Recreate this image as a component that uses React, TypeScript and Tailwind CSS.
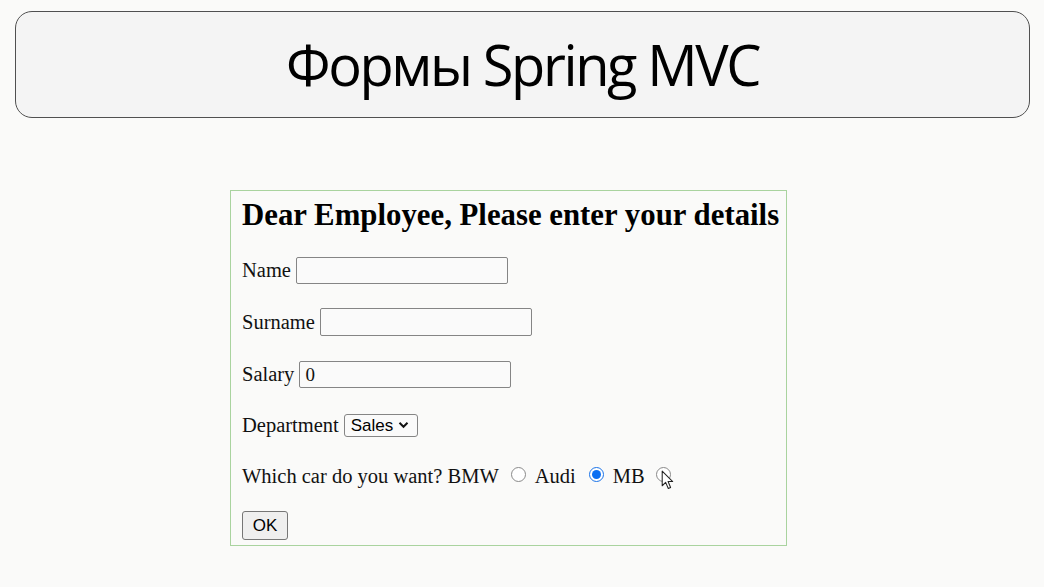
import React from "react";

function Radio({ checked = false }: { checked?: boolean }) {
  return (
    <span
      className={
        "inline-flex items-center justify-center w-[15px] h-[15px] rounded-full border " +
        (checked ? "border-[#1a73e8] bg-white" : "border-[#8a8a8a] bg-white")
      }
    >
      {checked && <span className="w-[9px] h-[9px] rounded-full bg-[#0b6ff2]" />}
    </span>
  );
}

export default function App() {
  const serif = { fontFamily: '"Liberation Serif", "Times New Roman", serif' };
  const sans = { fontFamily: '"Liberation Sans", Arial, sans-serif' };
  return (
    <div className="w-[1044px] h-[587px] bg-[#fafaf9] overflow-hidden flex flex-col items-start">
      <div className="ml-[15px] mt-[11px] w-[1015px] h-[107px] rounded-[17px] border border-[#505050] bg-[#f4f4f4] flex items-center justify-center">
        <span
          className="text-[56px] text-black leading-none mt-[-2px] tracking-[-2.4px]"
          style={{ fontFamily: '"Open Sans", "Noto Sans", sans-serif' }}
        >
          Формы Spring MVC
        </span>
      </div>

      <div
        className="ml-[230px] mt-[72px] w-[557px] h-[356px] border border-[#a9d39f] flex flex-col pl-[11px] text-[20.5px] text-[#111]"
        style={serif}
      >
        <div className="mt-[6px] h-[36px] flex items-center text-[30.8px] font-bold leading-none text-black">
          Dear Employee, Please enter your details
        </div>
        <div className="mt-[23px] h-[28px] flex items-center gap-[5px]">
          <span>Name</span>
          <span className="w-[212px] h-[27px] border border-[#858585] rounded-[2px] bg-[#fafafa]" />
        </div>
        <div className="mt-[24px] h-[28px] flex items-center gap-[5px]">
          <span>Surname</span>
          <span className="w-[212px] h-[28px] border border-[#858585] rounded-[2px] bg-[#fafafa]" />
        </div>
        <div className="mt-[24px] h-[28px] flex items-center gap-[5px]">
          <span>Salary</span>
          <span className="w-[212px] h-[27px] border border-[#858585] rounded-[2px] bg-[#fafafa] flex items-center pl-[5px] text-[19px] leading-none">
            0
          </span>
        </div>
        <div className="mt-[23px] h-[28px] flex items-center gap-[5px]">
          <span>Department</span>
          <span
            className="w-[74px] h-[23px] border border-[#858585] rounded-[3px] bg-[#fafafa] flex items-center pl-[6px] gap-[5px] text-[17px] leading-none text-black"
            style={sans}
          >
            Sales
            <svg width="11" height="8" viewBox="0 0 11 8">
              <path d="M1.5 1.8 L5.5 5.8 L9.5 1.8" fill="none" stroke="#111" strokeWidth="2" />
            </svg>
          </span>
        </div>
        <div className="mt-[23px] h-[28px] flex items-center">
          <span>Which car do you want? BMW</span>
          <span className="ml-[12px] mt-[-4px] flex"><Radio /></span>
          <span className="ml-[9px]">Audi</span>
          <span className="ml-[13px] mt-[-4px] flex"><Radio checked /></span>
          <span className="ml-[9px]">MB</span>
          <span className="ml-[11px] mt-[-4px] flex relative">
            <Radio />
            <svg className="absolute left-[5px] top-[3px]" width="15" height="21" viewBox="0 0 14 20">
              <path
                d="M1 1 L1 15 L4.3 11.8 L6.8 17.6 L9 16.6 L6.6 11 L11 11 Z"
                fill="white"
                stroke="#222"
                strokeWidth="1"
                strokeLinejoin="round"
              />
            </svg>
          </span>
        </div>
        <div className="mt-[21px] flex">
          <span
            className="w-[46px] h-[29px] border border-[#767676] rounded-[3px] bg-[#efefef] flex items-center justify-center text-[17px] text-black leading-none"
            style={sans}
          >
            OK
          </span>
        </div>
      </div>
    </div>
  );
}
